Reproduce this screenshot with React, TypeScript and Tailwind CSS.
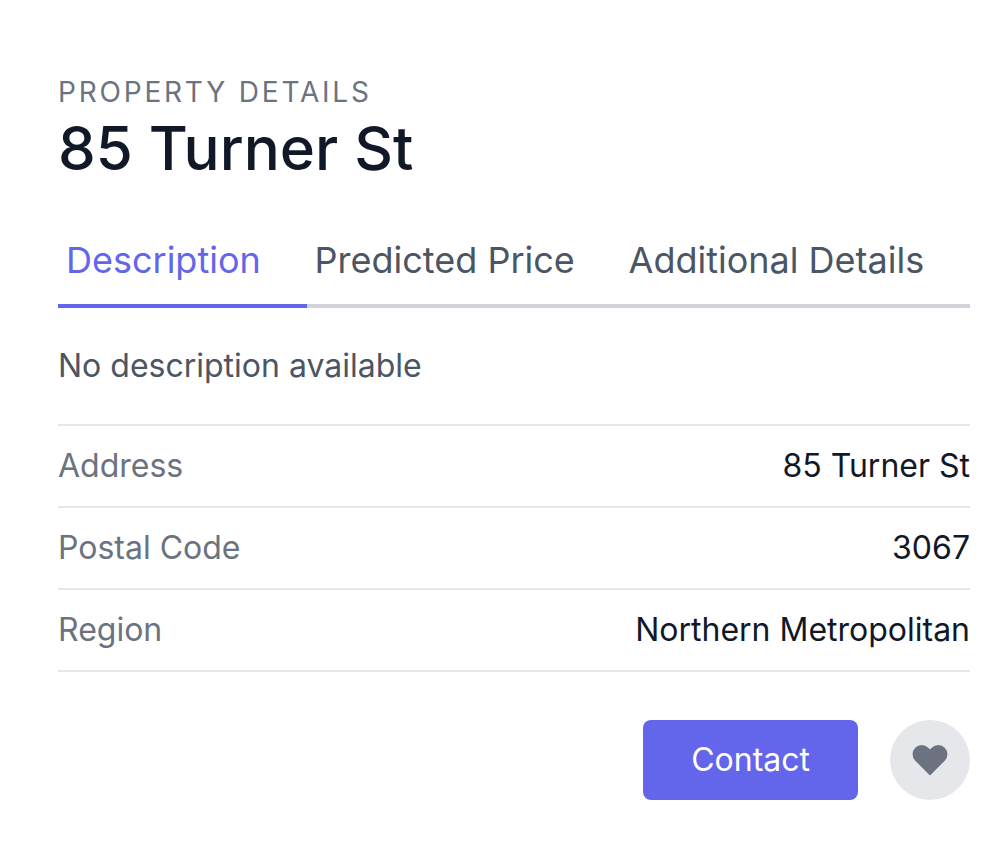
import { useState } from "react";

const tabs = ["Description", "Predicted Price", "Additional Details"];
const details = [
  ["Address", "85 Turner St"],
  ["Postal Code", "3067"],
  ["Region", "Northern Metropolitan"],
];

export default function App() {
  const [active, setActive] = useState(0);
  return (
    <main className="min-h-screen bg-white pt-[72px] pr-[34px] pb-[42px] pl-[58px] font-[Inter,sans-serif] text-[32px] leading-[48px]">
      <h2 className="text-[28px] leading-10 tracking-widest text-[#6b7280] uppercase">Property Details</h2>
      <h1 className="mb-8 text-[60px] leading-[72px] font-medium text-[#111827]">85 Turner St</h1>
      <div role="tablist" className="mb-8 flex">
        {tabs.map((tab, i) => (
          <button
            key={tab}
            type="button"
            role="tab"
            aria-selected={active === i}
            onClick={() => setActive(i)}
            className={`grow border-b-4 px-2 py-4 text-left text-[36px] leading-[56px] whitespace-nowrap ${active === i ? "border-[#6366ea] text-[#6366ea]" : "border-[#d1d5db] text-[#4b5563]"}`}
          >
            {tab}
          </button>
        ))}
      </div>
      <p className="mb-8 leading-[52px] text-[#4b5563]">No description available</p>
      <dl className="mb-12 border-b-2 border-[#e5e7eb]">
        {details.map(([label, value]) => (
          <div key={label} className="flex justify-between border-t-2 border-[#e5e7eb] py-4">
            <dt className="text-[#6b7280]">{label}</dt>
            <dd className="text-[#111827]">{value}</dd>
          </div>
        ))}
      </dl>
      <div className="flex justify-end gap-8">
        <button type="button" className="rounded-lg bg-[#6366ea] px-12 py-4 text-white">Contact</button>
        <button type="button" aria-label="Save property" className="flex size-20 items-center justify-center rounded-full bg-[#e5e7eb] text-[#6b7280]">
          <svg viewBox="0 0 24 24" className="size-10" fill="currentColor" aria-hidden="true">
            <path d="M20.84 4.61a5.5 5.5 0 00-7.78 0L12 5.67l-1.06-1.06a5.5 5.5 0 00-7.78 7.78l1.06 1.06L12 21.23l7.78-7.78 1.06-1.06a5.5 5.5 0 000-7.78z" />
          </svg>
        </button>
      </div>
    </main>
  );
}
